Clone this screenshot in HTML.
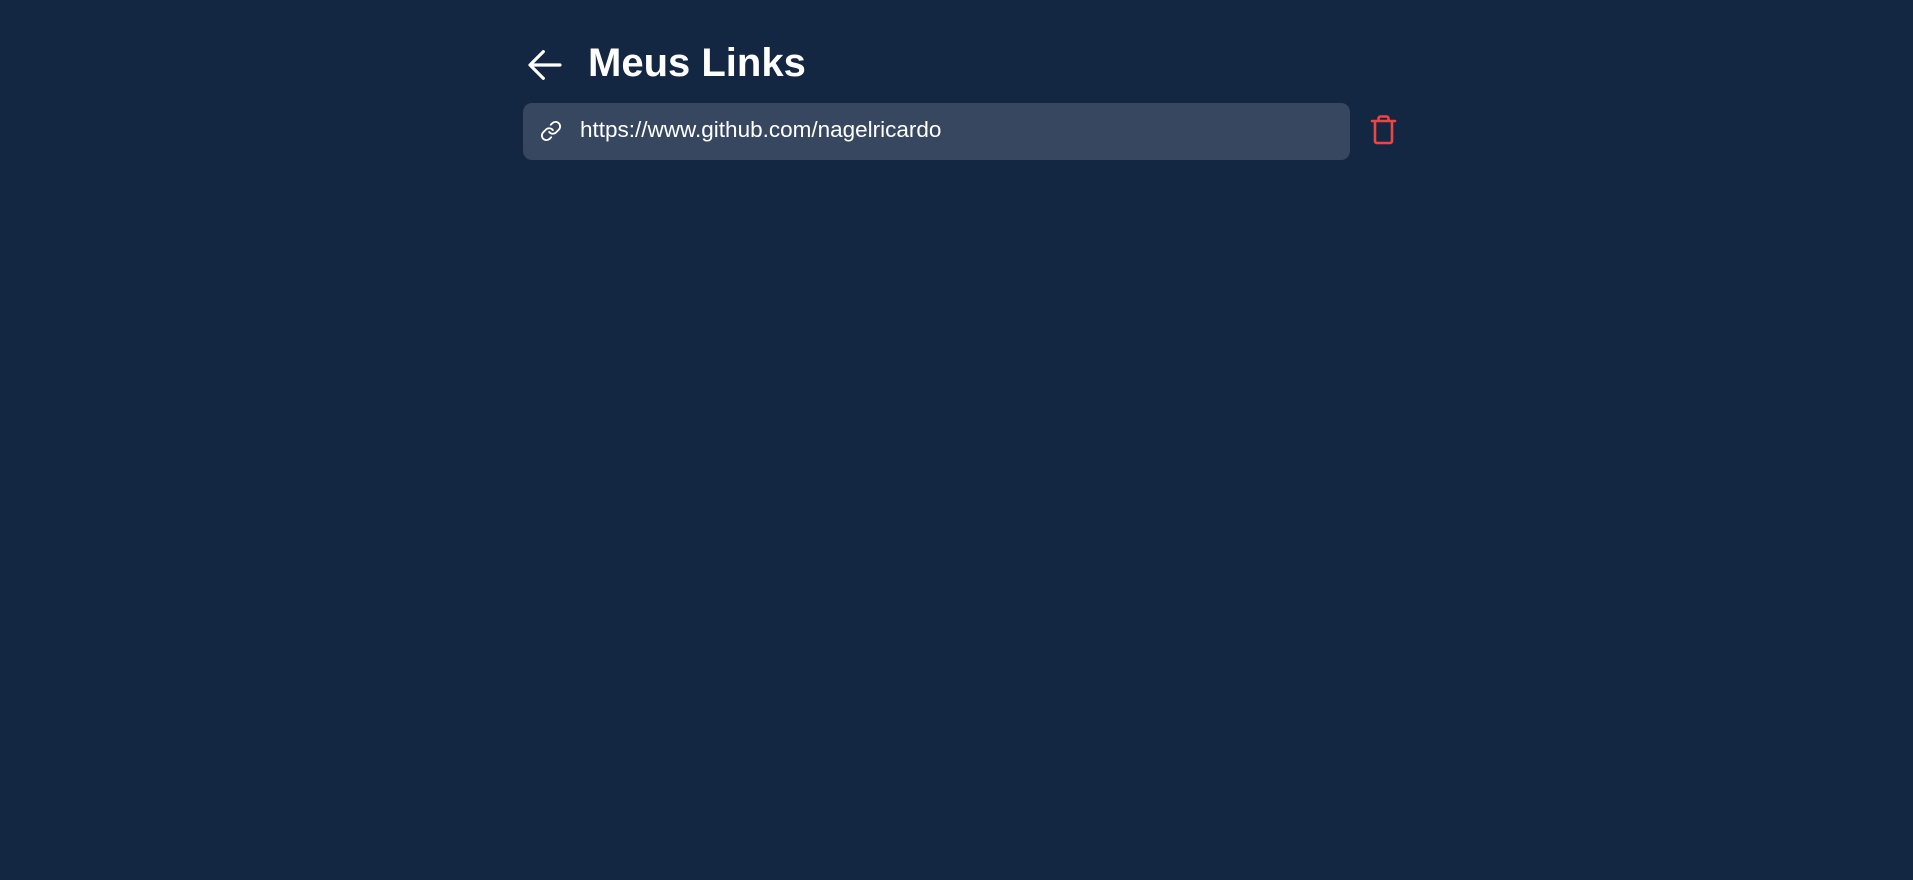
<!DOCTYPE html>
<html><head><meta charset="utf-8"><style>
html,body{margin:0;padding:0;width:1913px;height:880px;background:#132742;overflow:hidden;font-family:"Liberation Sans",Arial,sans-serif;}
.abs{position:absolute}
</style></head><body>
<svg class="abs" style="left:524px;top:45px" width="42" height="40" viewBox="0 0 24 24" fill="none" stroke="#fff" stroke-width="1.9" stroke-linecap="round" stroke-linejoin="round"><path d="M21 12H4M11 4l-8 8 8 8"/></svg>
<div class="abs" style="left:588px;top:38px;font-size:40px;font-weight:bold;color:#fff;line-height:50px">Meus Links</div>
<div class="abs" style="left:523px;top:103px;width:827px;height:57px;background:#374760;border-radius:9px"></div>
<svg class="abs" style="left:540px;top:120px" width="22" height="22" viewBox="0 0 24 24" fill="none" stroke="#fff" stroke-width="2" stroke-linecap="round" stroke-linejoin="round"><path d="M10 13a5 5 0 0 0 7.54.54l3-3a5 5 0 0 0-7.07-7.07l-1.72 1.71"/><path d="M14 11a5 5 0 0 0-7.54-.54l-3 3a5 5 0 0 0 7.07 7.07l1.71-1.71"/></svg>
<div class="abs" style="left:580px;top:116px;font-size:22.5px;color:#fff;line-height:28px">https://www.github.com/nagelricardo</div>
<svg class="abs" style="left:1369px;top:114px" width="29" height="31" viewBox="0 0 29 31" fill="none" stroke="#ef4444" stroke-width="2.6" stroke-linecap="round" stroke-linejoin="round"><path d="M3 7h23M9.5 7V4.5a2 2 0 0 1 2-2h6a2 2 0 0 1 2 2V7M6 7v20a2 2 0 0 0 2 2h13a2 2 0 0 0 2-2V7"/></svg>
</body></html>
